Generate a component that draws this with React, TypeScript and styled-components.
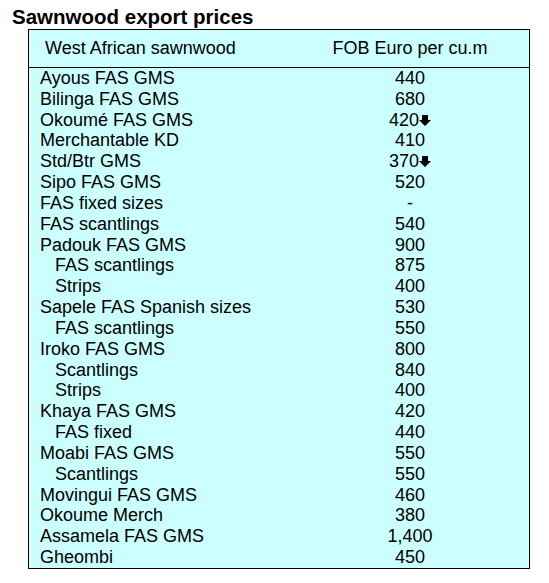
import React from "react";
import styled, { createGlobalStyle } from "styled-components";

const GlobalStyle = createGlobalStyle`
  html, body { margin: 0; padding: 0; background: #ffffff; }
  body { font-family: "Liberation Sans", Arial, sans-serif; color: #000; }
`;

const Page = styled.div`
  width: 549px;
  height: 583px;
  box-sizing: border-box;
  padding: 5px 0 0 0;
`;

const Title = styled.h1`
  margin: 0 0 1px 12px;
  font-size: 20.5px;
  line-height: 23px;
  font-weight: 700;
  color: #000;
`;

const Box = styled.div`
  margin-left: 28px;
  width: 502px;
  box-sizing: border-box;
  border: 1px solid #000;
  background: #ccffff;
`;

const HeaderRow = styled.div`
  display: grid;
  grid-template-columns: 1fr 238px;
  height: 37px;
  align-items: center;
  border-bottom: 1px solid #000;
  font-size: 18px;
  line-height: 37px;
`;

const HeaderLabel = styled.div`
  padding-left: 16px;
`;

const Cell = styled.div`
  text-align: center;
  white-space: nowrap;
`;

const Body = styled.div`
  display: flex;
  flex-direction: column;
`;

const Row = styled.div`
  display: grid;
  grid-template-columns: 1fr 238px;
  height: 20.83px;
  font-size: 18px;
  line-height: 20.83px;
`;

const Label = styled.div<{ $indent?: boolean }>`
  padding-left: ${(p) => (p.$indent ? 26 : 11)}px;
  white-space: nowrap;
`;

const Arrow = styled.svg`
  width: 12px;
  height: 11px;
  vertical-align: baseline;
`;

const DownArrow = () => (
  <Arrow viewBox="0 0 12 11">
    <polygon points="3,0 9,0 9,5 12,5 6,11 0,5 3,5" fill="#000" />
  </Arrow>
);

type Item = { label: string; value: string; indent?: boolean; down?: boolean };

const rows: Item[] = [
  { label: "Ayous FAS GMS", value: "440" },
  { label: "Bilinga FAS GMS", value: "680" },
  { label: "Okoumé FAS GMS", value: "420", down: true },
  { label: "Merchantable KD", value: "410" },
  { label: "Std/Btr GMS", value: "370", down: true },
  { label: "Sipo FAS GMS", value: "520" },
  { label: "FAS fixed sizes", value: "-" },
  { label: "FAS scantlings", value: "540" },
  { label: "Padouk FAS GMS", value: "900" },
  { label: "FAS scantlings", value: "875", indent: true },
  { label: "Strips", value: "400", indent: true },
  { label: "Sapele FAS Spanish sizes", value: "530" },
  { label: "FAS scantlings", value: "550", indent: true },
  { label: "Iroko FAS GMS", value: "800" },
  { label: "Scantlings", value: "840", indent: true },
  { label: "Strips", value: "400", indent: true },
  { label: "Khaya FAS GMS", value: "420" },
  { label: "FAS fixed", value: "440", indent: true },
  { label: "Moabi FAS GMS", value: "550" },
  { label: "Scantlings", value: "550", indent: true },
  { label: "Movingui FAS GMS", value: "460" },
  { label: "Okoume Merch", value: "380" },
  { label: "Assamela FAS GMS", value: "1,400" },
  { label: "Gheombi", value: "450" },
];

export default function App() {
  return (
    <>
      <GlobalStyle />
      <Page>
        <Title>Sawnwood export prices</Title>
        <Box>
          <HeaderRow>
            <HeaderLabel>West African sawnwood</HeaderLabel>
            <Cell>FOB Euro per cu.m</Cell>
          </HeaderRow>
          <Body>
            {rows.map((r, i) => (
              <Row key={i}>
                <Label $indent={r.indent}>{r.label}</Label>
                <Cell>
                  {r.value}
                  {r.down && <DownArrow />}
                </Cell>
              </Row>
            ))}
          </Body>
        </Box>
      </Page>
    </>
  );
}
